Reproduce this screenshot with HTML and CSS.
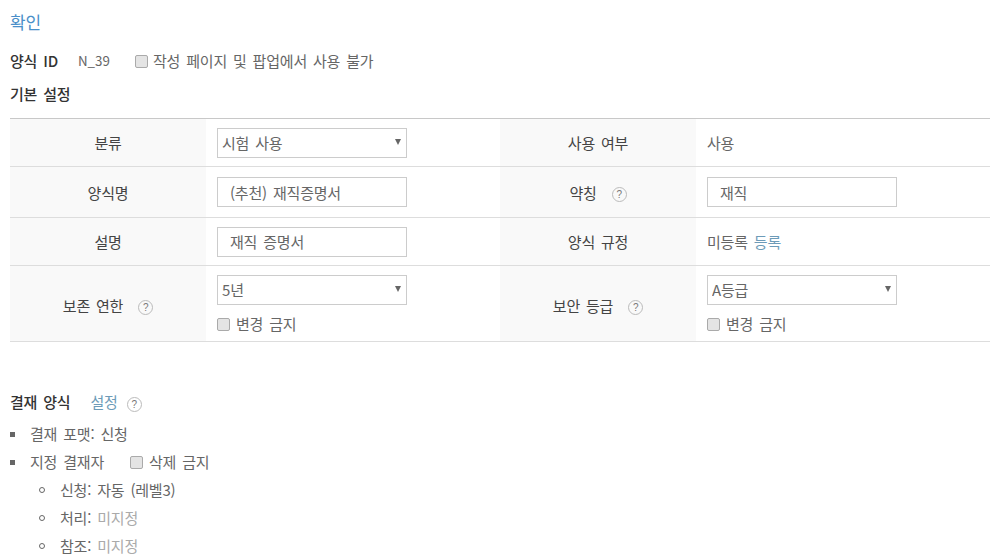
FILE: index.html
```html
<!DOCTYPE html>
<html lang="ko">
<head>
  <meta charset="UTF-8" />
  <title>양식 설정</title>
  <link rel="stylesheet" href="styles.css">
</head>
<body>
  <div class="top-bar">
    <a class="confirm-link" href="#">확인</a>
  </div>

  <div class="form-id">
    <strong>양식 ID</strong>
    <span class="form-id-value">N_39</span>
    <label class="check"><input type="checkbox" disabled /> 작성 페이지 및 팝업에서 사용 불가</label>
  </div>

  <h3 class="section-title">기본 설정</h3>

  <table class="setting-table">
    <colgroup>
      <col class="col-head" /><col class="col-body" /><col class="col-head" /><col class="col-body" />
    </colgroup>
    <tr class="row-a">
      <th>분류</th>
      <td>
        <span class="select-wrap"><select disabled><option>시험 사용</option></select></span>
      </td>
      <th>사용 여부</th>
      <td>사용</td>
    </tr>
    <tr class="row-b">
      <th>양식명</th>
      <td><input class="text-input" type="text" value="(추천) 재직증명서" /></td>
      <th>약칭 <span class="help">?</span></th>
      <td><input class="text-input" type="text" value="재직" /></td>
    </tr>
    <tr class="row-c">
      <th>설명</th>
      <td><input class="text-input" type="text" value="재직 증명서" /></td>
      <th>양식 규정</th>
      <td>미등록 <a class="link" href="#">등록</a></td>
    </tr>
    <tr class="row-d">
      <th>보존 연한 <span class="help">?</span></th>
      <td>
        <span class="select-wrap"><select disabled><option>5년</option></select></span>
        <label class="check check-sub"><input type="checkbox" disabled /> 변경 금지</label>
      </td>
      <th>보안 등급 <span class="help">?</span></th>
      <td>
        <span class="select-wrap"><select disabled><option>A등급</option></select></span>
        <label class="check check-sub"><input type="checkbox" disabled /> 변경 금지</label>
      </td>
    </tr>
  </table>

  <div class="approval-head">
    <h3 class="section-title">결재 양식</h3>
    <a class="link" href="#">설정</a>
    <span class="help">?</span>
  </div>

  <ul class="square-list">
    <li>결재 포맷: 신청</li>
    <li>
      지정 결재자
      <label class="check"><input type="checkbox" disabled /> 삭제 금지</label>
      <ul class="circle-list">
        <li>신청: 자동 (레벨3)</li>
        <li>처리: <span class="muted">미지정</span></li>
        <li>참조: <span class="muted">미지정</span></li>
      </ul>
    </li>
  </ul>
</body>
</html>
```

FILE: styles.css
```css
html, body {
  height: 560px;
  overflow: hidden;
}
body {
  margin: 0;
  padding: 0 9px 0 10px;
  background: #fff;
  color: #555;
  font-family: "Noto Sans CJK KR", "Noto Sans", sans-serif;
  font-size: 15px;
  line-height: 20px;
  word-spacing: 2px;
  letter-spacing: -0.2px;
}

/* top */
.top-bar {
  height: 46px;
  padding-top: 12px;
  box-sizing: border-box;
}
.confirm-link {
  color: #4a8fc9;
  font-size: 17px;
  text-decoration: none;
}
.form-id {
  display: flex;
  align-items: center;
  height: 30px;
}
.form-id strong {
  color: #333;
  font-weight: 500;
  width: 68px;
}
.form-id-value {
  width: 57px;
  color: #666;
  font-size: 13.3px;
  letter-spacing: 0;
}
.form-id .check {
  gap: 5px;
}
.section-title {
  margin: 0;
  color: #333;
  font-size: 15px;
  font-weight: 500;
}
.form-id + .section-title {
  margin-top: 8px;
  margin-bottom: 14px;
}

/* table */
.setting-table {
  width: 980px;
  table-layout: fixed;
  border-collapse: collapse;
  border-top: 1px solid #c8c8c8;
}
.col-head { width: 196px; }
.col-body { width: 294px; }
.setting-table tr {
  border-bottom: 1px solid #ddd;
}
.row-a { height: 48px; }
.row-b { height: 51px; }
.row-c { height: 48px; }
.row-d { height: 76px; }
.setting-table th {
  background: #f9f9f9;
  color: #444;
  font-weight: 400;
  text-align: center;
  padding: 0;
}
.setting-table td {
  padding: 0 0 0 11px;
  color: #666;
}
.row-b th {
  padding-top: 2px;
}
.row-d th {
  padding-top: 4px;
}
.row-d td {
  padding-top: 9px;
  vertical-align: top;
}

.text-input,
.select-wrap select {
  display: block;
  box-sizing: border-box;
  width: 190px;
  height: 30px;
  border: 1px solid #ccc;
  border-radius: 0;
  background: #fff;
  color: #666;
  font: inherit;
  word-spacing: inherit;
  letter-spacing: inherit;
  opacity: 1;
}
.text-input {
  padding: 0 12px;
}
.select-wrap {
  display: block;
  position: relative;
  width: 190px;
}
.select-wrap select {
  appearance: none;
  padding: 0 4px;
}
.select-wrap::after {
  content: "";
  position: absolute;
  top: 11px;
  right: 6px;
  border-style: solid;
  border-width: 6px 3px 0;
  border-color: #666 transparent transparent;
}

/* help badge */
.help {
  display: inline-block;
  box-sizing: border-box;
  width: 15px;
  height: 15px;
  margin-left: 9px;
  border: 1px solid #bbb;
  border-radius: 50%;
  color: #777;
  font-family: "Liberation Sans", sans-serif;
  font-size: 10px;
  line-height: 13px;
  text-align: center;
  vertical-align: middle;
}

/* checkbox */
.check {
  display: inline-flex;
  align-items: center;
  gap: 6px;
  color: #666;
}
.check input {
  appearance: none;
  box-sizing: border-box;
  width: 13px;
  height: 13px;
  margin: 1px 0 0;
  border: 1px solid #aaa;
  border-radius: 2px;
  background: #e4e4e4;
}
.check-sub {
  display: flex;
  margin-top: 9px;
}

.link {
  color: #6d9bb8;
  text-decoration: none;
}

/* approval */
.approval-head {
  display: flex;
  align-items: center;
  margin-top: 50px;
  height: 20px;
}
.approval-head .link {
  margin-left: 20px;
}
.approval-head .help {
  margin-left: 9px;
  margin-top: 4px;
}
.square-list,
.circle-list {
  list-style: none;
  margin: 0;
  padding: 0;
}
.square-list {
  margin-top: 8px;
}
.square-list li {
  position: relative;
  padding-left: 20px;
  line-height: 28px;
  color: #666;
}
.square-list > li::before {
  content: "";
  position: absolute;
  left: 0;
  top: 12px;
  width: 5px;
  height: 5px;
  background: #666;
}
.square-list .check {
  margin-left: 20px;
  vertical-align: top;
}
.circle-list {
  margin-left: 20px;
}
.circle-list li {
  padding-left: 30px;
  margin-left: -20px;
}
.circle-list li::before {
  content: "";
  position: absolute;
  left: 9px;
  top: 11px;
  box-sizing: border-box;
  width: 6px;
  height: 6px;
  border: 1px solid #666;
  border-radius: 50%;
}
.muted {
  color: #aaa;
}
```
